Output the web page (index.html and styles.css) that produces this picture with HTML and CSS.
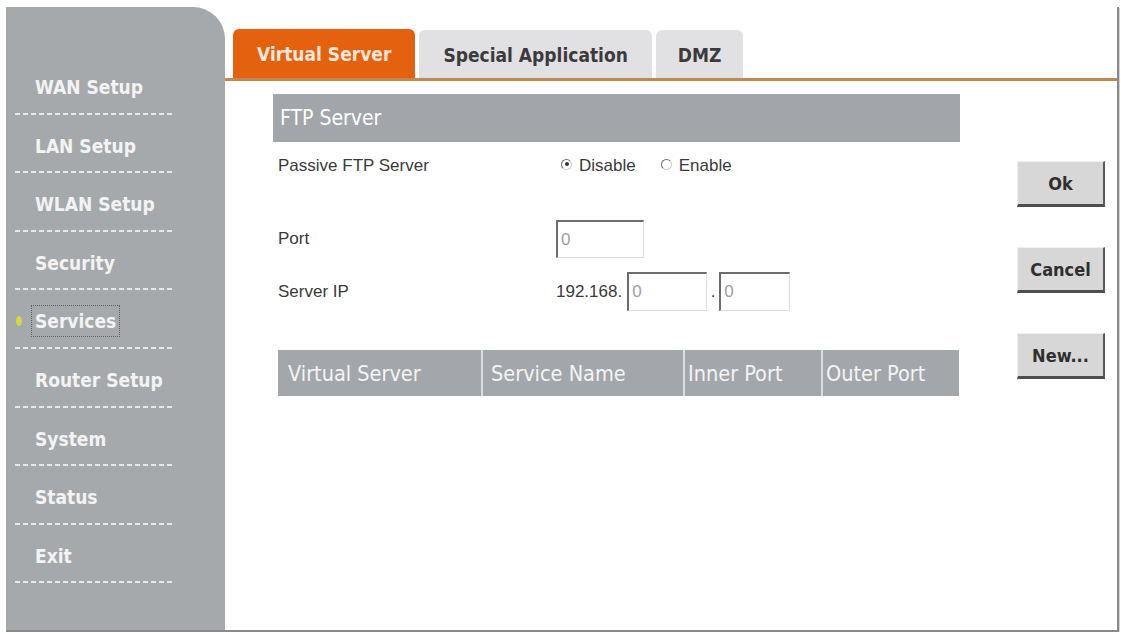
FILE: index.html
```html
<!DOCTYPE html>
<html lang="en">
<head>
  <meta charset="UTF-8" />
  <title>Services - Virtual Server</title>
  <link rel="stylesheet" href="styles.css">
</head>
<body>

<div class="frame">
  <aside class="sidebar">
    <ul class="nav">
      <li><span class="marker"></span><a class="nav-link">WAN Setup</a></li>
      <li><span class="marker"></span><a class="nav-link">LAN Setup</a></li>
      <li><span class="marker"></span><a class="nav-link">WLAN Setup</a></li>
      <li><span class="marker"></span><a class="nav-link">Security</a></li>
      <li class="current">
        <span class="marker">
          <svg width="8" height="12" viewBox="0 0 8 12"><ellipse cx="4" cy="6" rx="3" ry="5" fill="#d6d93a"/></svg>
        </span>
        <a class="nav-link">Services</a>
      </li>
      <li><span class="marker"></span><a class="nav-link">Router Setup</a></li>
      <li><span class="marker"></span><a class="nav-link">System</a></li>
      <li><span class="marker"></span><a class="nav-link">Status</a></li>
      <li><span class="marker"></span><a class="nav-link">Exit</a></li>
    </ul>
  </aside>

  <main class="main">
    <div class="tabs">
      <div class="tab active">Virtual Server</div>
      <div class="tab">Special Application</div>
      <div class="tab">DMZ</div>
    </div>

    <div class="panel">
      <div class="form">
        <div class="section-title">FTP Server</div>

        <div class="row row-passive">
          <div class="label">Passive FTP Server</div>
          <div class="value">
            <span class="radio checked"></span><span class="radio-text">Disable</span>
            <span class="radio"></span><span class="radio-text">Enable</span>
          </div>
        </div>

        <div class="row row-port">
          <div class="label">Port</div>
          <div class="value"><input class="field field-port" type="text" value="0"></div>
        </div>

        <div class="row row-ip">
          <div class="label">Server IP</div>
          <div class="value">
            <span class="ip-prefix">192.168.</span>
            <input class="field field-ip" type="text" value="0">
            <span class="ip-dot">.</span>
            <input class="field field-ip2" type="text" value="0">
          </div>
        </div>

        <table class="vs-table">
          <thead>
            <tr>
              <th class="c-vs">Virtual Server</th>
              <th class="c-name">Service Name</th>
              <th class="c-inner">Inner Port</th>
              <th class="c-outer">Outer Port</th>
            </tr>
          </thead>
        </table>
      </div>

      <div class="actions">
        <button class="btn">Ok</button>
        <button class="btn">Cancel</button>
        <button class="btn">New...</button>
      </div>
    </div>
  </main>
</div>

</body>
</html>
```

FILE: styles.css
```css
html, body {
  margin: 0;
  padding: 0;
  background: #fff;
}

body {
  font-family: "Liberation Sans", Arial, sans-serif;
  color: #333;
}

.frame {
  box-sizing: border-box;
  display: flex;
  width: 1113px;
  height: 625px;
  margin: 7px 2px 0 6px;
  border-right: 2px solid #8a8a8a;
  border-bottom: 2px solid #8a8a8a;
  box-shadow: 1px 1px 0 #d4d4d4;
}

/* left menu */
.sidebar {
  width: 219px;
  flex-shrink: 0;
  background: #a6a9ac;
  border-top-right-radius: 32px;
}

.nav {
  list-style: none;
  margin: 0;
  padding: 49px 0 0 9px;
}

.nav li {
  box-sizing: border-box;
  display: flex;
  align-items: center;
  width: 160px;
  height: 58.6px;
  padding-bottom: 14.6px;
  padding-top: 18px;
  background-image: repeating-linear-gradient(90deg, #e6e7e8 0 5px, transparent 5px 8px);
  background-size: 100% 2px;
  background-position: left bottom;
  background-repeat: no-repeat;
}

.marker {
  display: inline-flex;
  align-items: center;
  width: 16px;
  height: 26px;
}

.nav-link {
  display: inline-block;
  padding: 0 3px;
  border: 1px dotted transparent;
  line-height: 26px;
  font-family: "DejaVu Sans Condensed", "DejaVu Sans", sans-serif;
  font-weight: bold;
  font-size: 19px;
  color: #f3f3f3;
}

.current .nav-link {
  border-color: #5d6064;
  padding: 2px 3px;
}

/* tabs */
.main {
  flex: 1;
  min-width: 0;
  display: flex;
  flex-direction: column;
}

.tabs {
  display: flex;
  align-items: flex-end;
  gap: 4px;
  margin-top: 22px;
  padding-left: 8px;
  border-bottom: 3px solid #c5864f;
}

.tab {
  height: 48px;
  line-height: 50px;
  padding: 0 24px;
  border-radius: 6px 6px 0 0;
  background: #e1e1e3;
  color: #3b3b3d;
  font-family: "DejaVu Sans Condensed", "DejaVu Sans", sans-serif;
  font-weight: bold;
  font-size: 19px;
}

.tab:last-child {
  padding: 0 22px 0 22px;
}

.tab.active {
  height: 49px;
  background: #e4620f;
  color: #f6e6da;
}

/* content */
.panel {
  display: flex;
  flex: 1;
}

.form {
  width: 687px;
  margin: 13px 0 0 48px;
}

.section-title {
  height: 48px;
  line-height: 48px;
  padding-left: 7px;
  background: #a2a6aa;
  color: #fff;
  font-family: "DejaVu Sans Condensed", "DejaVu Sans", sans-serif;
  font-size: 21px;
}

.row {
  display: grid;
  grid-template-columns: 283px 1fr;
  align-items: center;
  font-size: 17px;
  color: #3a3a3a;
}

.label {
  padding-left: 5px;
}

.value {
  display: flex;
  align-items: center;
}

.row-passive {
  height: 48px;
}

.row-passive .value {
  padding-left: 5px;
}

.row-port {
  height: 38px;
  margin-top: 30px;
}

.row-ip {
  height: 39px;
  margin-top: 14px;
}

.radio {
  box-sizing: border-box;
  display: inline-flex;
  align-items: center;
  justify-content: center;
  width: 11px;
  height: 11px;
  margin-right: 7px;
  margin-top: -4px;
  border-radius: 50%;
  border: 1.5px solid #cfcfcf;
  border-top-color: #6d6d6d;
  border-left-color: #6d6d6d;
}

.radio.checked::after {
  content: "";
  width: 4px;
  height: 4px;
  border-radius: 50%;
  background: #333;
}

.radio-text {
  margin-right: 25px;
}

.field {
  box-sizing: border-box;
  height: 38px;
  padding: 0 3px;
  border-style: solid;
  border-width: 2px 1px 1px 2px;
  border-color: #6c6c6c #dedede #dedede #6c6c6c;
  background: #fff;
  font-family: "Liberation Sans", Arial, sans-serif;
  font-size: 17px;
  color: #a0a0a0;
  outline: none;
}

.field-port {
  width: 88px;
}

.field-ip {
  width: 80px;
  height: 39px;
  margin-left: 5px;
}

.field-ip2 {
  width: 71px;
  height: 39px;
}

.ip-dot {
  width: 12px;
  text-align: center;
}

/* virtual server list */
.vs-table {
  width: 681px;
  margin: 39px 0 0 5px;
  border-collapse: collapse;
  table-layout: fixed;
}

.vs-table th {
  box-sizing: border-box;
  height: 46px;
  padding: 0;
  background: #a3a7ab;
  border-right: 2px solid #dcdde0;
  color: #f4f4f4;
  text-align: left;
  font-family: "DejaVu Sans Condensed", "DejaVu Sans", sans-serif;
  font-weight: normal;
  font-size: 21.5px;
  white-space: nowrap;
  overflow: hidden;
}

.vs-table th:last-child {
  border-right: none;
}

.vs-table .c-vs { width: 204px; padding-left: 10px; }
.vs-table .c-name { width: 202px; padding-left: 8px; }
.vs-table .c-inner { width: 138px; padding-left: 3px; }
.vs-table .c-outer { padding-left: 3px; }

/* buttons on the right */
.actions {
  display: flex;
  flex-direction: column;
  gap: 40px;
  margin-left: auto;
  margin-right: 12px;
  padding-top: 80px;
}

.btn {
  box-sizing: border-box;
  width: 88px;
  height: 46px;
  padding: 0;
  background: #d7d7d7;
  border-style: solid;
  border-width: 1px 2px 3px 1px;
  border-color: #efefef #5a5a5a #4e4e4e #efefef;
  color: #2f2f2f;
  font-family: "DejaVu Sans Condensed", "DejaVu Sans", sans-serif;
  font-weight: bold;
  font-size: 18px;
}
```
